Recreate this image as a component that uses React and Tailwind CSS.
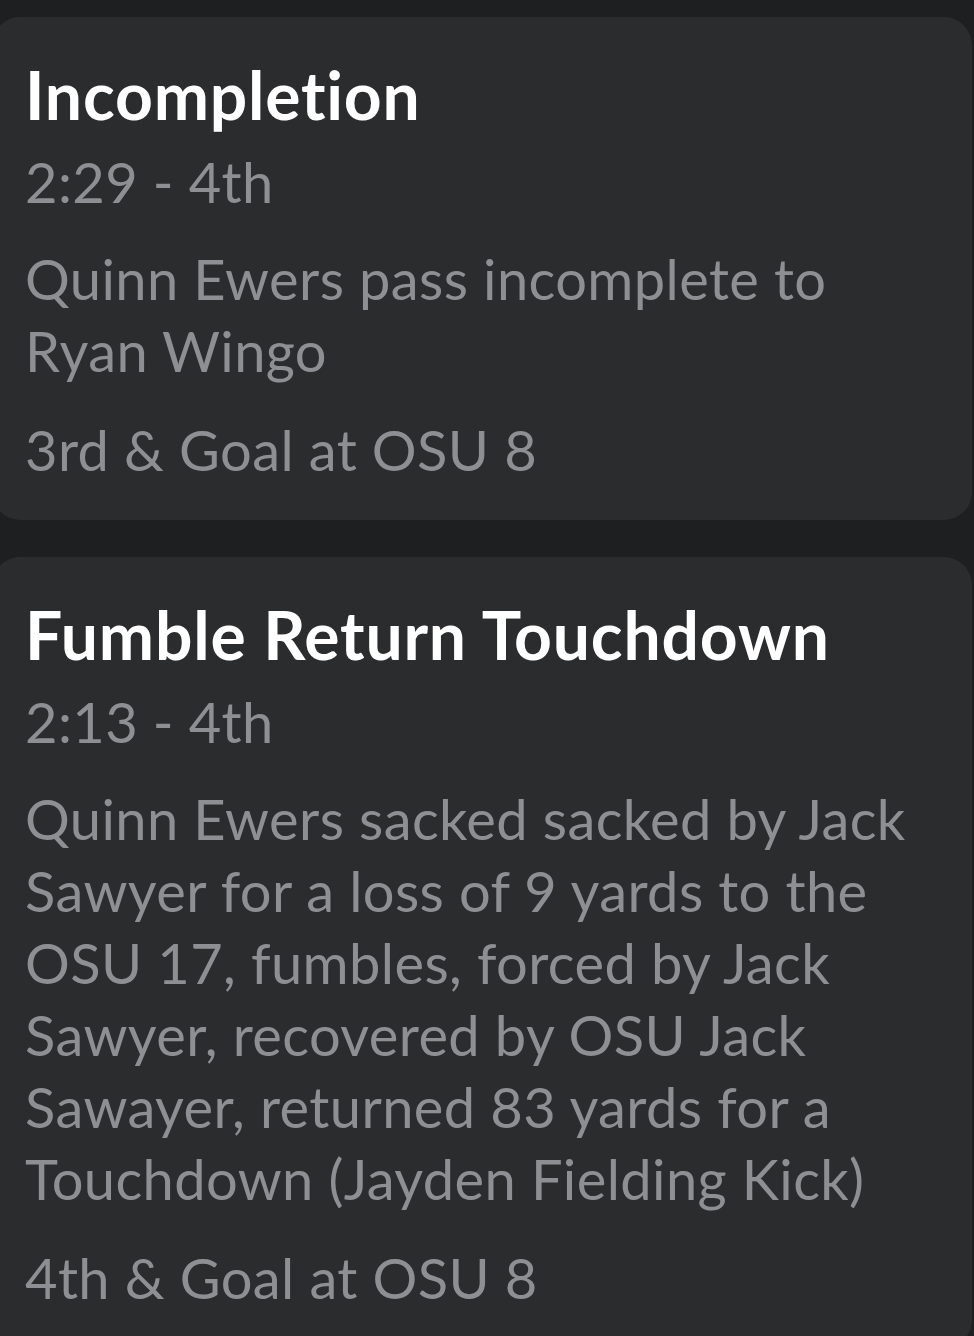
export default function App() {
  const plays = [
    {
      title: "Incompletion",
      time: "2:29 - 4th",
      text: "Quinn Ewers pass incomplete to Ryan Wingo",
      situation: "3rd & Goal at OSU 8",
    },
    {
      title: "Fumble Return Touchdown",
      time: "2:13 - 4th",
      text: "Quinn Ewers sacked sacked by Jack Sawyer for a loss of 9 yards to the OSU 17, fumbles, forced by Jack Sawyer, recovered by OSU Jack Sawayer, returned 83 yards for a Touchdown (Jayden Fielding Kick)",
      situation: "4th & Goal at OSU 8",
    },
  ];
  return (
    <div
      className="min-h-[1336px] w-[974px] overflow-hidden bg-[#1e1f21] pt-[17px] [font-variant-ligatures:none]"
      style={{ fontFamily: "Lato, 'Open Sans', sans-serif" }}
    >
      <div className="flex flex-col gap-[37px]">
        {plays.map((p) => (
          <div
            key={p.title}
            className="-ml-2 mr-[2px] rounded-[28px] bg-[#2b2c2e] pl-[33px] pr-[30px] pt-[38px] pb-[34px]"
          >
            <div className="text-[66px] font-bold leading-[80px] tracking-[0.8px] text-white">
              {p.title}
            </div>
            <div className="mt-[11px] text-[56px] leading-[72px] tracking-[0.4px] text-[#8e8f92]">
              {p.time}
            </div>
            <div className="mt-[25px] text-[56px] leading-[72px] tracking-[0.4px] text-[#8e8f92]">
              {p.text}
            </div>
            <div className="mt-[27px] text-[56px] leading-[72px] tracking-[0.4px] text-[#8e8f92]">
              {p.situation}
            </div>
          </div>
        ))}
      </div>
    </div>
  );
}
